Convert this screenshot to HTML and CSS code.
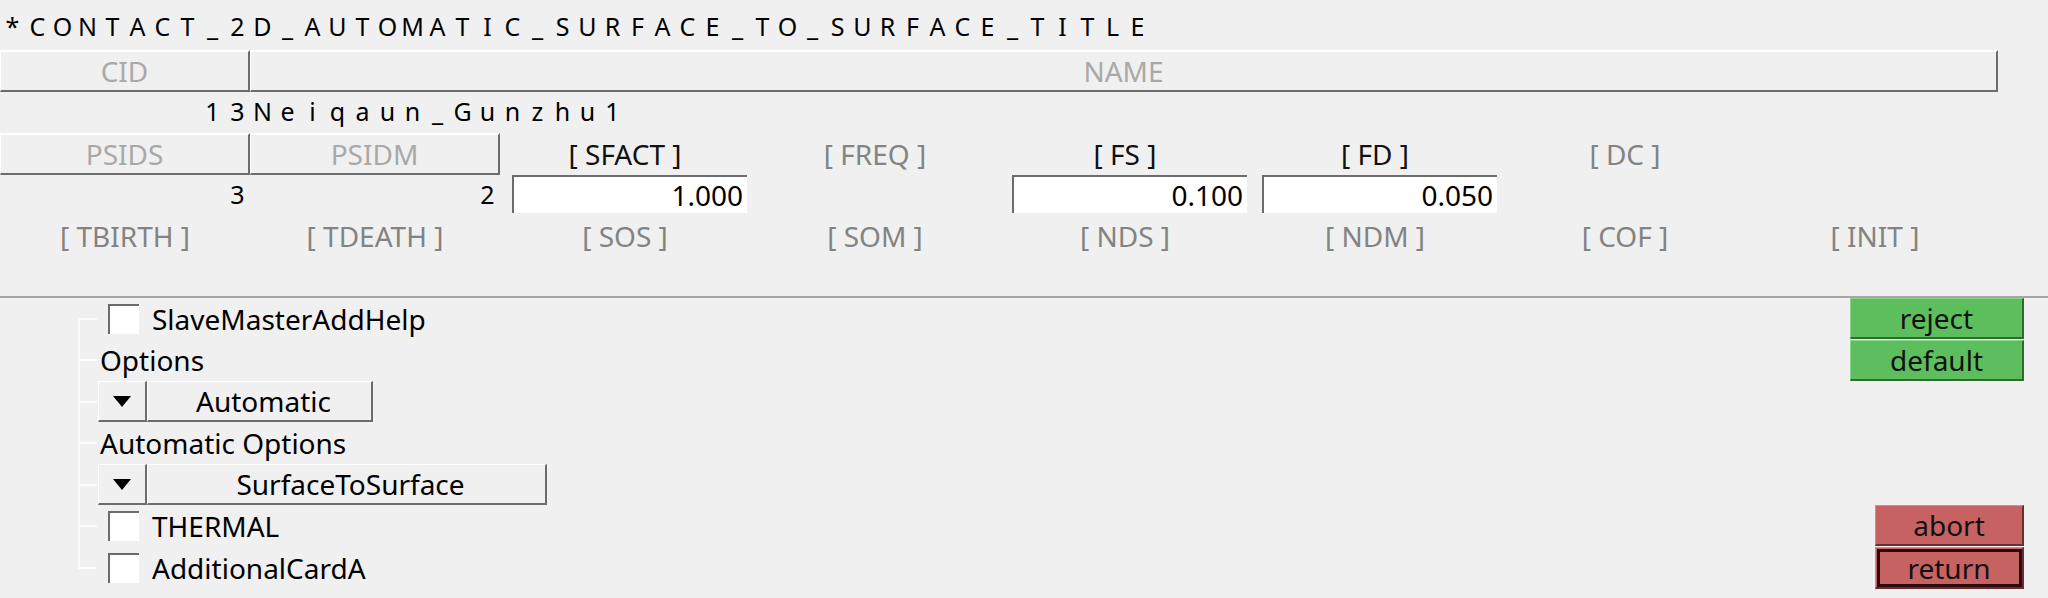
FILE: index.html
```html
<!DOCTYPE html>
<html>
    <head>
        <title>*CONTACT_2D_AUTOMATIC_SURFACE_TO_SURFACE_TITLE</title>
        <meta http-equiv="content-type" content="text/html; charset=UTF-8">
        <link rel="stylesheet" href="styles.css">
    </head>
    <body>
        <div class="card">
            <!-- keyword title, one char per 25px column -->
            <div class="title cells"><span class="c">*</span><span class="c">C</span><span class="c">O</span><span class="c">N</span><span class="c">T</span><span class="c">A</span><span class="c">C</span><span class="c">T</span><span class="c">_</span><span class="c">2</span><span class="c">D</span><span class="c">_</span><span class="c">A</span><span class="c">U</span><span class="c">T</span><span class="c">O</span><span class="c">M</span><span class="c">A</span><span class="c">T</span><span class="c">I</span><span class="c">C</span><span class="c">_</span><span class="c">S</span><span class="c">U</span><span class="c">R</span><span class="c">F</span><span class="c">A</span><span class="c">C</span><span class="c">E</span><span class="c">_</span><span class="c">T</span><span class="c">O</span><span class="c">_</span><span class="c">S</span><span class="c">U</span><span class="c">R</span><span class="c">F</span><span class="c">A</span><span class="c">C</span><span class="c">E</span><span class="c">_</span><span class="c">T</span><span class="c">I</span><span class="c">T</span><span class="c">L</span><span class="c">E</span></div>

            <div class="row hdrow">
                <div class="hd">CID</div>
                <div class="hd wide">NAME</div>
            </div>
            <div class="row datarow">
                <div class="cells right"><span class="c">1</span><span class="c">3</span></div>
                <div class="cells wide"><span class="c">N</span><span class="c">e</span><span class="c">i</span><span class="c">q</span><span class="c">a</span><span class="c">u</span><span class="c">n</span><span class="c">_</span><span class="c">G</span><span class="c">u</span><span class="c">n</span><span class="c">z</span><span class="c">h</span><span class="c">u</span><span class="c">1</span></div>
            </div>

            <div class="row hdrow">
                <div class="hd">PSIDS</div>
                <div class="hd">PSIDM</div>
                <div class="lbl on">[ SFACT ]</div>
                <div class="lbl">[ FREQ ]</div>
                <div class="lbl on">[ FS ]</div>
                <div class="lbl on">[ FD ]</div>
                <div class="lbl">[ DC ]</div>
                <div></div>
            </div>
            <div class="row inrow">
                <div class="cells right"><span class="c">3</span></div>
                <div class="cells right"><span class="c">2</span></div>
                <div class="input">1.000</div>
                <div></div>
                <div class="input">0.100</div>
                <div class="input">0.050</div>
                <div></div>
                <div></div>
            </div>
            <div class="row lblrow">
                <div class="lbl">[ TBIRTH ]</div>
                <div class="lbl">[ TDEATH ]</div>
                <div class="lbl">[ SOS ]</div>
                <div class="lbl">[ SOM ]</div>
                <div class="lbl">[ NDS ]</div>
                <div class="lbl">[ NDM ]</div>
                <div class="lbl">[ COF ]</div>
                <div class="lbl">[ INIT ]</div>
            </div>
        </div>

        <div class="panel">
            <div class="tree">
                <div class="node"><span class="check"></span>SlaveMasterAddHelp</div>
                <div class="node">Options</div>
                <div class="node">
                    <div class="combo">
                        <div class="raised arrow"><span class="tri"></span></div>
                        <div class="raised face">Automatic</div>
                    </div>
                </div>
                <div class="node">Automatic Options</div>
                <div class="node">
                    <div class="combo">
                        <div class="raised arrow"><span class="tri"></span></div>
                        <div class="raised face long">SurfaceToSurface</div>
                    </div>
                </div>
                <div class="node"><span class="check"></span>THERMAL</div>
                <div class="node"><span class="check"></span>AdditionalCardA</div>
            </div>

            <div class="actions">
                <div class="grp">
                    <div class="act ok">reject</div>
                    <div class="act ok">default</div>
                </div>
                <div class="grp">
                    <div class="act no">abort</div>
                    <div class="act no focus">return</div>
                </div>
            </div>
        </div>
    </body>
</html>
```

FILE: styles.css
```css
body { margin: 0; width: 2048px; height: 598px; overflow: hidden; background: #f0f0f0; color: #000; font-family: "Noto Sans", "Open Sans", sans-serif; font-size: 28px; }

/* keyword card: 8 fields of 250px */
.card { width: 2000px; height: 296px; }
.cells { display: flex; align-items: center; }
.cells.right { justify-content: flex-end; }
.c { display: inline-block; width: 25px; text-align: center; font-size: 25px; line-height: 1; }
.title { height: 50px; padding-top: 2px; box-sizing: border-box; }

.row { display: grid; grid-template-columns: repeat(8, 250px); }
.wide { grid-column: span 7; }
.hdrow { height: 40px; }
.datarow { height: 43px; }
.inrow { height: 42px; }
.lblrow { height: 42px; }

.hd { box-sizing: border-box; display: flex; align-items: center; justify-content: center; color: #a9a9a9; border-top: 2px solid #fff; border-left: 1px solid #fff; border-right: 2px solid #6c6c6c; border-bottom: 2px solid #6c6c6c; }
.hd.wide { margin-right: 2px; }
.lbl { display: flex; align-items: center; justify-content: center; color: #838383; }
.lbl.on { color: #111; }
.input { margin: 2px 3px 2px 12px; box-sizing: border-box; background: #fff; border-top: 2px solid #6c6c6c; border-left: 2px solid #6c6c6c; text-align: right; padding-right: 4px; line-height: 36px; }

/* lower option panel */
.panel { display: flex; justify-content: space-between; height: 302px; box-sizing: border-box; border-top: 2px solid #a6a6a6; }

.tree { position: relative; margin-left: 78px; align-self: flex-start; }
.tree:before { content: ""; position: absolute; left: 0; top: 20px; bottom: 20px; width: 2px; background: #fcfcfc; }
.node { display: flex; align-items: center; height: 41.5px; white-space: nowrap; }
.node:before { content: ""; flex: none; width: 19px; height: 2px; background: #fcfcfc; margin-right: 3px; }

.check { flex: none; width: 31px; height: 30px; box-sizing: border-box; margin: 0 13px 0 8px; background: #fff; border-top: 2px solid #6c6c6c; border-left: 2px solid #6c6c6c; }

.combo { display: flex; height: 41px; margin-left: -2px; }
.raised { box-sizing: border-box; display: flex; align-items: center; justify-content: center; border-top: 1px solid #fff; border-left: 1px solid #fff; border-right: 2px solid #6c6c6c; border-bottom: 2px solid #6c6c6c; }
.arrow { width: 49px; }
.face { width: 226px; padding-left: 8px; }
.face.long { width: 400px; }
.tri { width: 0; height: 0; border-left: 9px solid transparent; border-right: 9px solid transparent; border-top: 11px solid #000; }

.actions { display: flex; flex-direction: column; justify-content: space-between; align-items: flex-end; margin-right: 24px; padding-bottom: 9px; }
.grp { display: flex; flex-direction: column; align-items: flex-end; gap: 1px; }
.act { box-sizing: border-box; height: 41px; display: flex; align-items: center; justify-content: center; color: #111; }
.ok { width: 174px; background: #5dbe5d; border-top: 1px solid #8ad48a; border-left: 1px solid #8ad48a; border-right: 2px solid #2f6a2f; border-bottom: 2px solid #2f6a2f; }
.no { width: 149px; background: #c76262; border-top: 1px solid #d88a8a; border-left: 1px solid #d88a8a; border-right: 2px solid #6a2e2e; border-bottom: 2px solid #6a2e2e; }
.focus { height: 42px; outline: 3px solid #2a0c0c; outline-offset: -5px; }
```
